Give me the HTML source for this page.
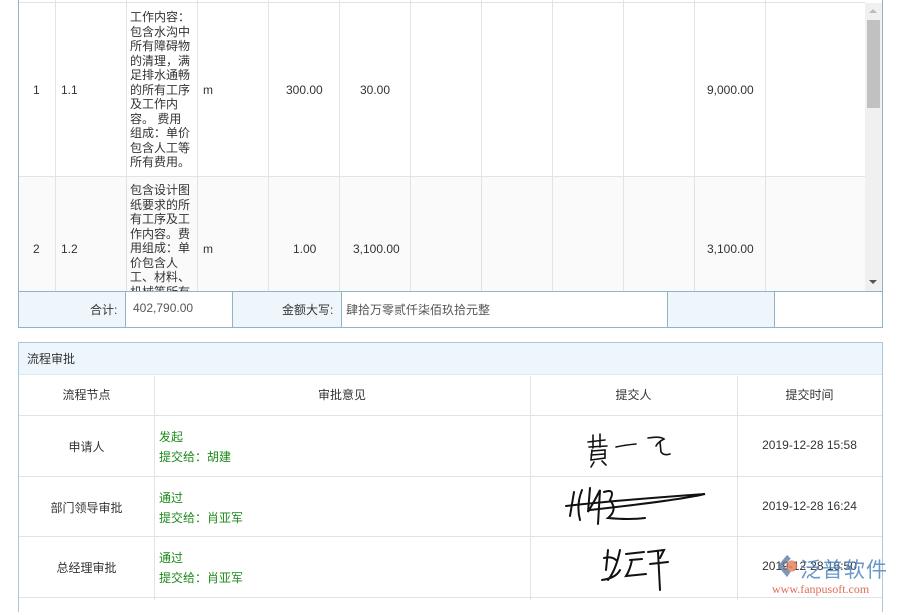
<!DOCTYPE html>
<html><head><meta charset="utf-8"><style>
*{margin:0;padding:0;box-sizing:border-box}
body{width:900px;height:600px;overflow:hidden;background:#fff;font-family:"Liberation Sans","Noto Sans CJK SC",sans-serif;font-size:12px;color:#333;position:relative}
.a{position:absolute}
.vl{position:absolute;width:1px;background:#e3e3e3}
.hl{position:absolute;height:1px;background:#e3e3e3}
.desc{position:absolute;left:130px;width:62px;line-height:14.5px;font-size:12px;color:#333;overflow:hidden;word-break:break-all}
.c{position:absolute;text-align:center}
.g{color:#1a8a1a}
</style></head><body>
<div class="a" style="left:18px;top:0;width:1px;height:328px;background:#8fb3c8"></div>
<div class="a" style="left:882px;top:0;width:1px;height:328px;background:#8fb3c8"></div>
<div class="a" style="left:19px;top:177px;width:846px;height:114px;background:#fafafa"></div>
<div class="hl" style="left:19px;top:2px;width:846px"></div>
<div class="hl" style="left:19px;top:176px;width:846px"></div>
<div class="vl" style="left:55px;top:0;height:291px"></div>
<div class="vl" style="left:126px;top:0;height:291px"></div>
<div class="vl" style="left:197px;top:0;height:291px"></div>
<div class="vl" style="left:268px;top:0;height:291px"></div>
<div class="vl" style="left:339px;top:0;height:291px"></div>
<div class="vl" style="left:410px;top:0;height:291px"></div>
<div class="vl" style="left:481px;top:0;height:291px"></div>
<div class="vl" style="left:552px;top:0;height:291px"></div>
<div class="vl" style="left:623px;top:0;height:291px"></div>
<div class="vl" style="left:694px;top:0;height:291px"></div>
<div class="vl" style="left:765px;top:0;height:291px"></div>
<div class="a" style="left:865px;top:3px;width:17px;height:288px;background:#f0f0f0"></div>
<div class="a" style="left:867px;top:20px;width:13px;height:88px;background:#c1c1c1"></div>
<div class="a" style="left:869px;top:9px;width:0;height:0;border-left:4px solid transparent;border-right:4px solid transparent;border-bottom:4px solid #bbb"></div>
<div class="a" style="left:869px;top:280px;width:0;height:0;border-left:4px solid transparent;border-right:4px solid transparent;border-top:4px solid #555"></div>
<div class="a" style="left:33px;top:83px">1</div>
<div class="a" style="left:61px;top:83px">1.1</div>
<div class="desc" style="top:10px;height:160px">工作内容：包含水沟中所有障碍物的清理，满足排水通畅的所有工序及工作内容。 费用组成：单价包含人工等所有费用。</div>
<div class="a" style="left:203px;top:83px">m</div>
<div class="a" style="left:286px;top:83px">300.00</div>
<div class="a" style="left:360px;top:83px">30.00</div>
<div class="a" style="left:707px;top:83px">9,000.00</div>
<div class="a" style="left:33px;top:242px">2</div>
<div class="a" style="left:61px;top:242px">1.2</div>
<div class="desc" style="top:183px;height:108px">包含设计图纸要求的所有工序及工作内容。费用组成：单价包含人工、材料、机械等所有</div>
<div class="a" style="left:203px;top:242px">m</div>
<div class="a" style="left:293px;top:242px">1.00</div>
<div class="a" style="left:353px;top:242px">3,100.00</div>
<div class="a" style="left:707px;top:242px">3,100.00</div>
<div class="a" style="left:18px;top:291px;width:865px;height:37px;border:1px solid #8fb3c8;background:#fff"></div>
<div class="a" style="left:19px;top:292px;width:107px;height:35px;background:#eef6fc;border-right:1px solid #8fb3c8"></div>
<div class="a" style="left:232px;top:292px;width:110px;height:35px;background:#eef6fc;border-left:1px solid #8fb3c8;border-right:1px solid #8fb3c8"></div>
<div class="a" style="left:667px;top:292px;width:108px;height:35px;background:#eef6fc;border-left:1px solid #8fb3c8;border-right:1px solid #8fb3c8"></div>
<div class="a" style="left:90px;top:301px">合计:</div>
<div class="a" style="left:133px;top:301px;color:#555">402,790.00</div>
<div class="a" style="left:282px;top:301px">金额大写:</div>
<div class="a" style="left:346px;top:301px;color:#555">肆拾万零贰仟柒佰玖拾元整</div>
<div class="a" style="left:18px;top:342px;width:865px;height:270px;border:1px solid #a9c8dc;border-bottom:none"></div>
<div class="a" style="left:19px;top:343px;width:863px;height:32px;background:#eef6fd;border-bottom:1px solid #dde8ef"></div>
<div class="a" style="left:27px;top:350px">流程审批</div>
<div class="hl" style="left:19px;top:415px;width:863px"></div>
<div class="hl" style="left:19px;top:476px;width:863px"></div>
<div class="hl" style="left:19px;top:536px;width:863px"></div>
<div class="hl" style="left:19px;top:597px;width:863px"></div>
<div class="vl" style="left:154px;top:376px;height:224px"></div>
<div class="vl" style="left:530px;top:376px;height:224px"></div>
<div class="vl" style="left:737px;top:376px;height:224px"></div>
<div class="c" style="left:19px;width:135px;top:386px">流程节点</div>
<div class="c" style="left:154px;width:376px;top:386px">审批意见</div>
<div class="c" style="left:530px;width:207px;top:386px">提交人</div>
<div class="c" style="left:737px;width:145px;top:386px">提交时间</div>
<div class="c" style="left:19px;width:135px;top:438px">申请人</div>
<div class="c" style="left:19px;width:135px;top:499px">部门领导审批</div>
<div class="c" style="left:19px;width:135px;top:559px">总经理审批</div>
<div class="a g" style="left:159px;top:428px">发起</div>
<div class="a g" style="left:159px;top:448px">提交给：胡建</div>
<div class="a g" style="left:159px;top:489px">通过</div>
<div class="a g" style="left:159px;top:509px">提交给：肖亚军</div>
<div class="a g" style="left:159px;top:549px">通过</div>
<div class="a g" style="left:159px;top:569px">提交给：肖亚军</div>
<div class="c" style="left:737px;width:145px;top:438px">2019-12-28 15:58</div>
<div class="c" style="left:737px;width:145px;top:499px">2019-12-28 16:24</div>
<div class="c" style="left:737px;width:145px;top:559px">2019-12-28 16:50</div>
<svg class="a" style="left:560px;top:420px" width="180" height="180" viewBox="0 0 180 180" fill="none" stroke="#111" stroke-linecap="round">
<g stroke-width="1.6">
<path d="M28 22 L45 20 M33 15 L33 28 M40 14 L40 27 M29 27 L47 26 M32 30 L31 40 L45 38 L45 30 L32 31 M31 35 L45 34 M34 42 L31 47 M42 41 L46 45"/>
<path d="M56 27 Q65 25 76 24"/>
<path d="M88 18 Q100 16 104 19 Q98 22 96 26 M100 22 L101 32 Q104 36 110 34"/>
</g>
<g stroke-width="2">
<path d="M6 86 Q60 80 145 74 Q120 80 30 90"/>
<path d="M14 72 L10 96 M22 70 Q16 85 20 100 M30 68 L28 92 Q35 80 40 70 L38 104 M44 72 Q56 68 50 80 Q58 90 48 98 Q70 100 85 98"/>
</g>
<g stroke-width="2">
<path d="M48 130 L46 150 M44 138 Q52 136 56 140 M60 130 Q56 150 48 160 M42 160 Q56 158 60 150"/>
<path d="M66 134 L84 132 M70 140 L82 139 M72 140 Q70 150 66 156 L86 154"/>
<path d="M88 132 L104 130 L100 138 M90 144 L108 142 M98 132 L100 170"/>
</g>
</svg>
<svg class="a" style="left:774px;top:553px" width="28" height="26" viewBox="0 0 30 28"><path d="M14 2 L4 14 L14 26 L18 20 L10 14 L18 6Z" fill="#5a7da0" opacity=".8"/><circle cx="19" cy="14" r="6" fill="#e07c5a" opacity=".8"/></svg>
<div class="a" style="left:800px;top:554px;font-size:21px;color:#4f86bf;opacity:.85;letter-spacing:1px">泛普软件</div>
<div class="a" style="left:772px;top:582px;font-family:'Liberation Serif',serif;font-size:12px;color:#d9472f;opacity:.8">www.fanpusoft.com</div>
</body></html>
